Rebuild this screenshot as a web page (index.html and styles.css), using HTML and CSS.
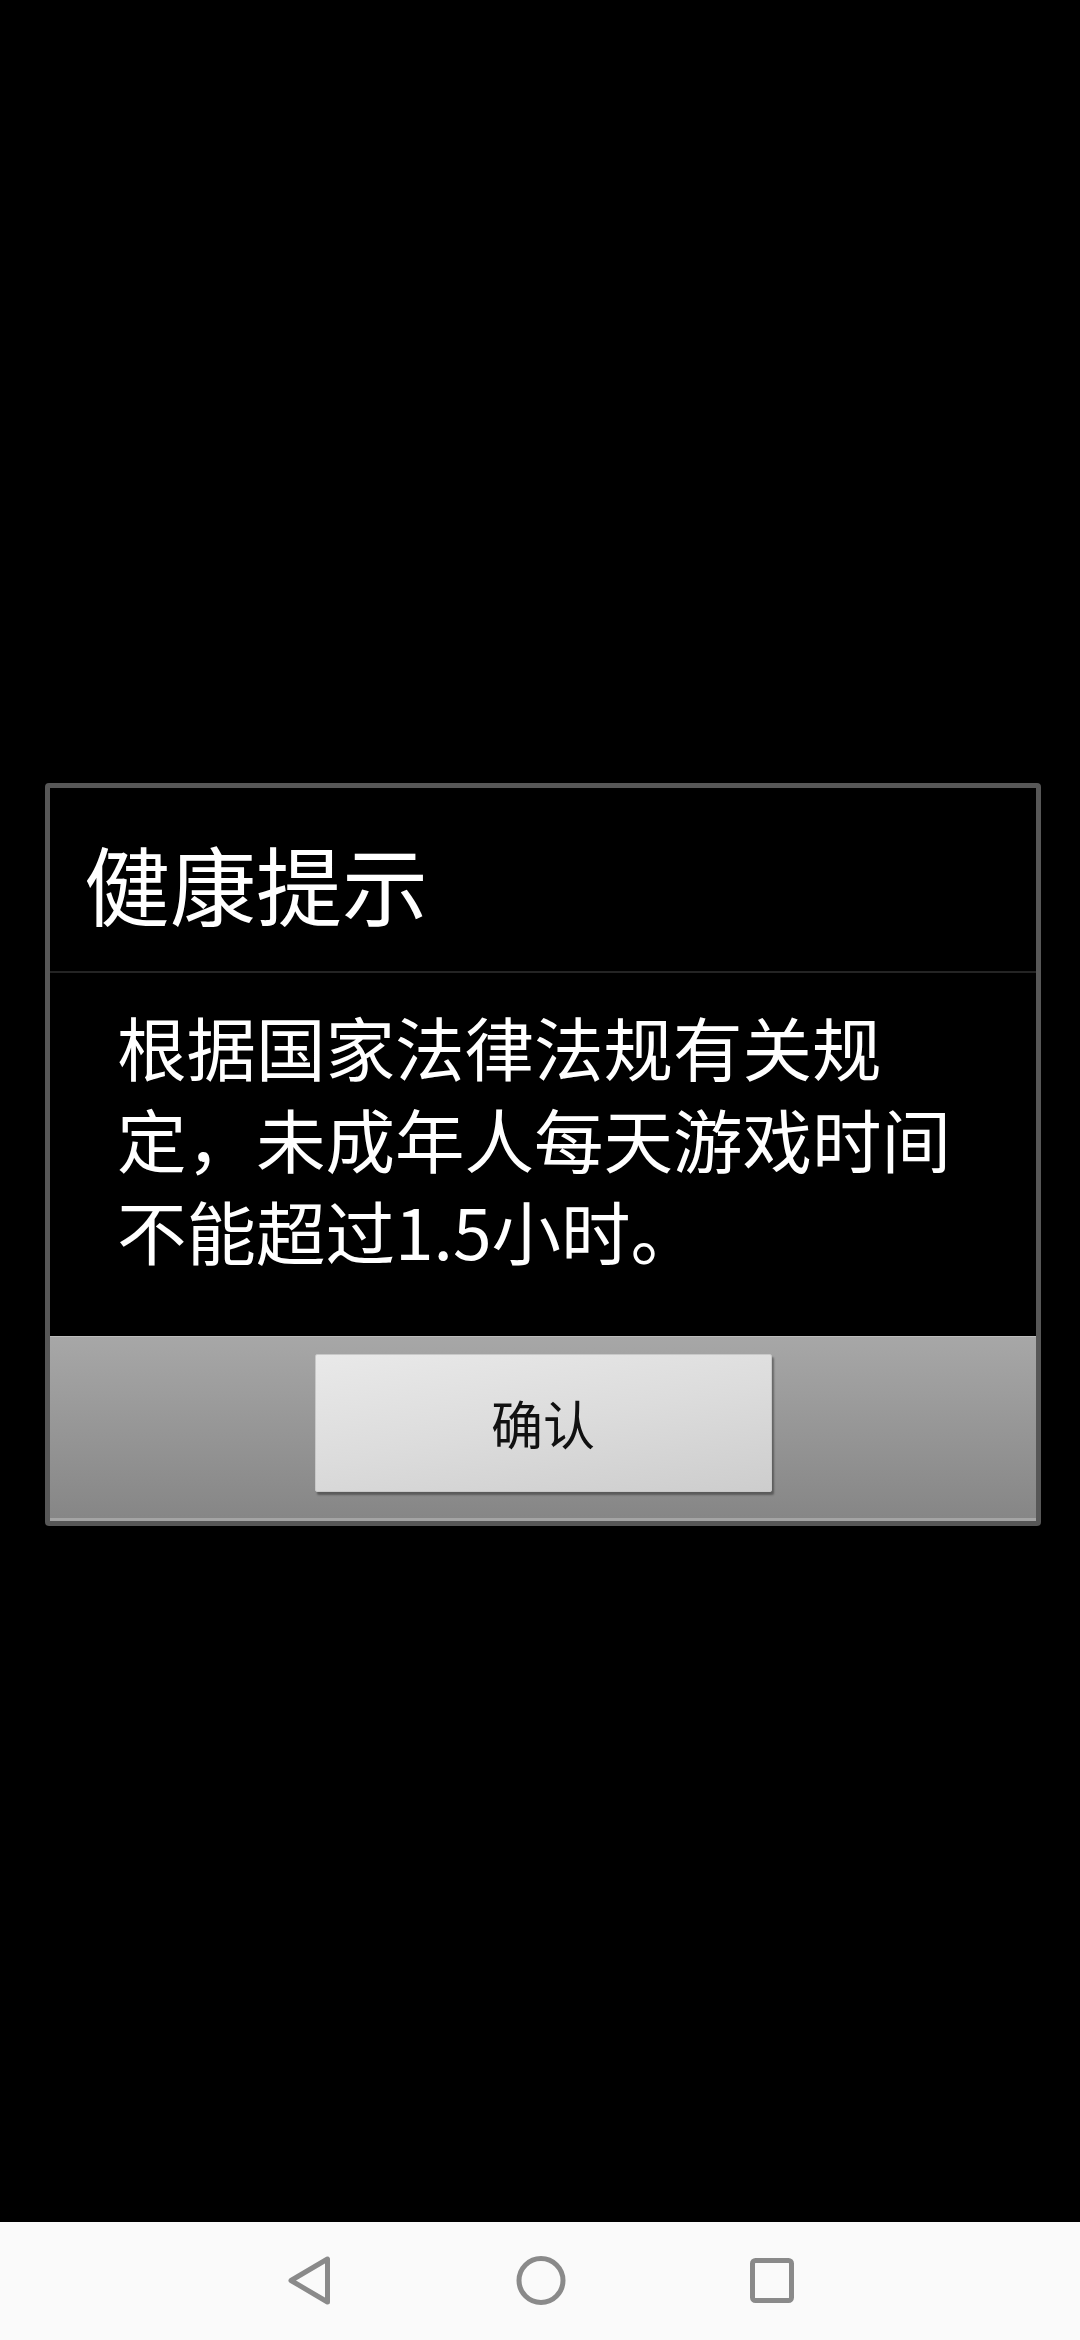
FILE: index.html
```html
<!DOCTYPE html>
<html lang="zh-CN">
<head>
<meta charset="utf-8">
<title>健康提示</title>
<link rel="stylesheet" href="styles.css">
</head>
<body>
<div class="screen">
  <main class="stage">
    <div class="dialog">
      <div class="dialog-header">
        <h1 class="dialog-title">健康提示</h1>
      </div>
      <div class="dialog-body">
        <p class="dialog-message">根据国家法律法规有关规定，未成年人每天游戏时间不能超过1.5小时。</p>
      </div>
      <div class="dialog-actions">
        <button class="btn-confirm" type="button">确认</button>
      </div>
    </div>
  </main>
  <nav class="navbar">
    <span class="nav-slot">
      <svg viewBox="0 0 60 60" width="60" height="60"><path d="M12 30.5 L48.5 9 L48.5 52 Z" fill="none" stroke="#8a8a8a" stroke-width="5" stroke-linejoin="round"/></svg>
    </span>
    <span class="nav-slot">
      <svg viewBox="0 0 60 60" width="60" height="60"><circle cx="30" cy="30.5" r="22" fill="none" stroke="#8a8a8a" stroke-width="5"/></svg>
    </span>
    <span class="nav-slot">
      <svg viewBox="0 0 60 60" width="60" height="60"><rect x="9.5" y="10.5" width="39" height="40" rx="3" fill="none" stroke="#8a8a8a" stroke-width="5"/></svg>
    </span>
  </nav>
</div>
</body>
</html>
```
FILE: styles.css
```css
html, body {
  margin: 0;
  padding: 0;
  background: #000;
}
body {
  width: 1080px;
  height: 2340px;
  overflow: hidden;
  font-family: "Noto Sans CJK SC", "Noto Sans", sans-serif;
}
.screen {
  display: flex;
  flex-direction: column;
  height: 2340px;
}
.stage {
  flex: 1;
  background: #000;
  padding-top: 783px;
  box-sizing: border-box;
}
.dialog {
  margin-left: 45px;
  width: 996px;
  box-sizing: border-box;
  border: 5px solid #575757;
  border-radius: 4px;
  background: #000;
}
.dialog-header {
  height: 185px;
  box-sizing: border-box;
  padding: 7px 0 0 34px;
  border-bottom: 2px solid #242424;
}
.dialog-title {
  margin: 0;
  font-weight: normal;
  font-size: 86px;
  line-height: 176px;
  color: #fff;
}
.dialog-body {
  height: 363px;
  box-sizing: border-box;
  padding: 27px 66px 0 67px;
}
.dialog-message {
  margin: 0;
  font-size: 69.5px;
  line-height: 92px;
  color: #fff;
}
.dialog-actions {
  height: 185px;
  box-sizing: border-box;
  display: flex;
  justify-content: center;
  align-items: flex-start;
  padding-top: 17px;
  background: linear-gradient(#a7a7a7, #868686);
  border-top: 1px solid #bcbcbc;
  border-bottom: 3px solid #a4a4a4;
}
.btn-confirm {
  width: 457px;
  height: 138px;
  margin: 0;
  padding: 0;
  border: 1px solid #c8c8c8;
  border-radius: 2px;
  background: linear-gradient(170deg, #e9e9e9 0%, #dcdcdc 50%, #cdcdcd 100%);
  box-shadow: 2px 3px 2px rgba(0,0,0,0.35);
  font-family: "Noto Sans CJK SC", "Noto Sans", sans-serif;
  font-size: 52px;
  color: #111;
  line-height: 1;
}
.navbar {
  height: 118px;
  flex: none;
  background: #fafafa;
  display: flex;
  align-items: flex-start;
  padding: 28px 0 0 279px;
  box-sizing: border-box;
  gap: 172px;
}
.nav-slot {
  display: block;
  width: 60px;
  height: 60px;
}
.nav-slot svg {
  display: block;
}
```
